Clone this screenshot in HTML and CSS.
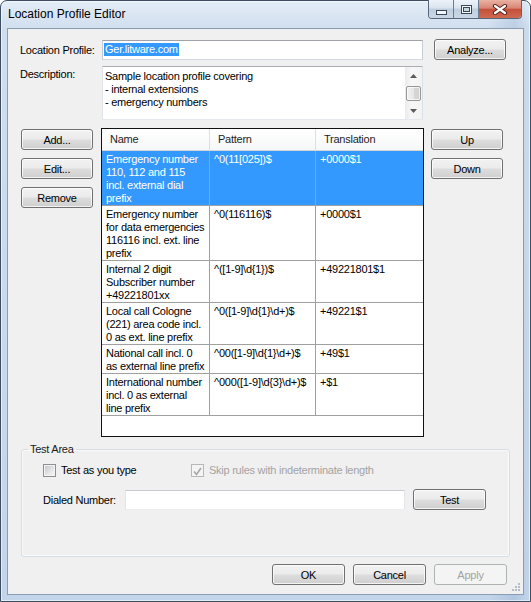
FILE: index.html
```html
<!DOCTYPE html>
<html>
<head>
<meta charset="utf-8">
<title>Location Profile Editor</title>
<link rel="stylesheet" href="styles.css">
</head>
<body>
<div class="window">
  <div class="titlebar">
    <div class="title">Location Profile Editor</div>
    <div class="caption">
      <div class="cbtn cmin"><svg width="11" height="5" viewBox="0 0 11 5"><rect x="0.5" y="0.5" width="10" height="4" fill="#f4f7fb" stroke="#3a4656"/></svg></div>
      <div class="cbtn cmax"><svg width="11" height="9" viewBox="0 0 11 9"><rect x="0.5" y="0.5" width="10" height="8" fill="#f4f7fb" stroke="#3a4656"/><rect x="2.5" y="2.5" width="6" height="4" fill="#c9d5e3" stroke="#3a4656"/></svg></div>
      <div class="cbtn cclose"><svg width="16" height="11" viewBox="0 0 16 11"><path d="M3 2 L13 9 M13 2 L3 9" stroke="#5b231b" stroke-width="4.2" stroke-linecap="round"/><path d="M3 2 L13 9 M13 2 L3 9" stroke="#ffffff" stroke-width="2.2" stroke-linecap="round"/></svg></div>
    </div>
  </div>

  <div class="client">
    <div class="profile-row">
      <label class="lbl">Location Profile:</label>
      <div class="textbox profile-box"><span class="sel">Ger.litware.com</span></div>
      <button class="btn gap-left">Analyze...</button>
    </div>

    <div class="desc-row">
      <label class="lbl lbl-top">Description:</label>
      <div class="textarea">
        <div class="ta-text">Sample location profile covering<br>- internal extensions<br>- emergency numbers</div>
        <div class="vscroll">
          <div class="sb-arrow"><svg width="7" height="4" viewBox="0 0 7 4"><path d="M0 4 L3.5 0 L7 4 Z" fill="#5a5a5a"/></svg></div>
          <div class="sb-track"><div class="sb-thumb"></div></div>
          <div class="sb-arrow"><svg width="7" height="4" viewBox="0 0 7 4"><path d="M0 0 L3.5 4 L7 0 Z" fill="#5a5a5a"/></svg></div>
        </div>
      </div>
    </div>

    <div class="rules">
      <div class="btn-col">
        <button class="btn">Add...</button>
        <button class="btn">Edit...</button>
        <button class="btn">Remove</button>
      </div>
      <div class="list">
        <table class="grid">
          <colgroup><col class="c1"><col class="c2"><col class="c3"></colgroup>
          <thead>
            <tr><th>Name</th><th>Pattern</th><th>Translation</th></tr>
          </thead>
          <tbody>
            <tr class="selected"><td>Emergency number<br>110, 112 and 115<br>incl. external dial<br>prefix</td><td>^0(11[025])$</td><td>+0000$1</td></tr>
            <tr><td>Emergency number<br>for data emergencies<br>116116 incl. ext. line<br>prefix</td><td>^0(116116)$</td><td>+0000$1</td></tr>
            <tr><td>Internal 2 digit<br>Subscriber number<br>+49221801xx</td><td>^([1-9]\d{1})$</td><td>+49221801$1</td></tr>
            <tr><td>Local call Cologne<br>(221) area code incl.<br>0 as ext. line prefix</td><td>^0([1-9]\d{1}\d+)$</td><td>+49221$1</td></tr>
            <tr><td>National call incl. 0<br>as external line prefix</td><td>^00([1-9]\d{1}\d+)$</td><td>+49$1</td></tr>
            <tr><td>International number<br>incl. 0 as external<br>line prefix</td><td>^000([1-9]\d{3}\d+)$</td><td>+$1</td></tr>
          </tbody>
        </table>
      </div>
      <div class="btn-col">
        <button class="btn">Up</button>
        <button class="btn">Down</button>
      </div>
    </div>

    <fieldset class="group">
      <legend>Test Area</legend>
      <div class="check-row">
        <label class="check"><span class="box"><span class="box-in"></span></span>Test as you type</label>
        <label class="check disabled"><span class="box box-dis"><svg width="9" height="9" viewBox="0 0 9 9"><path d="M1 4.5 L3.5 7.5 L8 1" fill="none" stroke="#a6a6a6" stroke-width="1.6"/></svg></span>Skip rules with indeterminate length</label>
      </div>
      <div class="dial-row">
        <label class="lbl">Dialed Number:</label>
        <div class="textbox dial-box"></div>
        <button class="btn test-btn">Test</button>
      </div>
    </fieldset>

    <div class="footer">
      <button class="btn">OK</button>
      <button class="btn">Cancel</button>
      <button class="btn" disabled>Apply</button>
    </div>

    <svg class="grip" width="10" height="10" viewBox="0 0 10 10">
      <g fill="#b4bcc6">
        <rect x="7" y="1" width="2" height="2"/>
        <rect x="4" y="4" width="2" height="2"/><rect x="7" y="4" width="2" height="2"/>
        <rect x="1" y="7" width="2" height="2"/><rect x="4" y="7" width="2" height="2"/><rect x="7" y="7" width="2" height="2"/>
      </g>
    </svg>
  </div>
</div>
</body>
</html>
```

FILE: styles.css
```css
* {
  box-sizing: border-box;
}

html, body {
  margin: 0;
  padding: 0;
}

body {
  width: 531px;
  height: 602px;
  overflow: hidden;
  background: #ffffff;
  font-family: "Liberation Sans", Arial, sans-serif;
  font-size: 11px;
  letter-spacing: -0.25px;
  color: #000;
}

/* ---------- window frame ---------- */
.window {
  width: 531px;
  height: 602px;
  display: flex;
  flex-direction: column;
  border: 1px solid #3d4e63;
  border-radius: 7px 7px 0 0;
  padding: 0 6px 6px 6px;
  background:
    linear-gradient(to right, rgba(255,255,255,0) 92%, rgba(90,130,180,0.18) 97%, rgba(255,255,255,0) 100%),
    linear-gradient(to bottom, #e4edf7 0, #d0deee 28px, #c3d5ea 100%);
  box-shadow: inset 0 0 0 1px rgba(255,255,255,0.55);
}

.titlebar {
  height: 27px;
  display: flex;
  align-items: flex-start;
  padding-left: 1px;
}

.title {
  font-size: 12px;
  letter-spacing: 0;
  line-height: 15px;
  padding-top: 6px;
  color: #000;
}

.caption {
  margin-left: auto;
  margin-right: 2px;
  margin-top: -1px;
  height: 19px;
  display: flex;
  border: 1px solid #56677c;
  border-top: none;
  border-radius: 0 0 4px 4px;
  overflow: hidden;
}

.cbtn {
  display: flex;
  align-items: center;
  justify-content: center;
}

.cmin, .cmax {
  width: 25px;
  border-right: 1px solid #6c7d92;
  background: linear-gradient(to bottom, #eef3f9 0%, #d9e3ee 45%, #bfcedf 50%, #cad7e6 100%);
}

.cmin svg {
  margin-top: 6px;
}

.cclose {
  width: 42px;
  background: linear-gradient(to bottom, #eab2a3 0%, #d98572 45%, #c5503b 52%, #cf6a50 100%);
}

/* ---------- client area ---------- */
.client {
  flex: 1;
  position: relative;
  display: flex;
  flex-direction: column;
  border: 1px solid #8b9db2;
  background: #f0f0f0;
}

.lbl {
  display: block;
  line-height: 20px;
}

.profile-row {
  display: flex;
  align-items: flex-start;
  margin-top: 10px;
  padding-left: 12px;
}

.profile-row .lbl {
  width: 82px;
  margin-top: 1px;
}

.textbox {
  height: 20px;
  background: #fff;
  border: 1px solid;
  border-color: #abadb3 #dbdfe6 #e3e9ef #e2e3ea;
}

.profile-box {
  width: 321px;
  margin-top: 1px;
  padding: 2px 0 0 1px;
  border-color: #9fa2a8 #c7ccd3 #d3d9df #c7ccd3;
}

.sel {
  display: inline-block;
  line-height: 13px;
  padding: 0 1px;
  background: #3399ff;
  color: #fff;
}

.gap-left {
  margin-left: 11px;
}

.desc-row {
  display: flex;
  align-items: flex-start;
  margin-top: 6px;
  padding-left: 12px;
}

.lbl-top {
  width: 82px;
  line-height: 13px;
  padding-top: 2px;
}

.textarea {
  width: 321px;
  height: 54px;
  display: flex;
  background: #fff;
  border: 1px solid;
  border-color: #abadb3 #dbdfe6 #e3e9ef #e2e3ea;
}

.ta-text {
  flex: 1;
  padding: 3px 2px;
  line-height: 13px;
}

.vscroll {
  width: 17px;
  display: flex;
  flex-direction: column;
  background: linear-gradient(to right, #ebebeb, #f7f7f7 40%, #f3f3f3);
}

.sb-arrow {
  height: 17px;
  display: flex;
  align-items: center;
  justify-content: center;
}

.sb-track {
  flex: 1;
  padding: 2px 1px 0 1px;
}

.sb-thumb {
  height: 15px;
  border: 1px solid #979797;
  border-radius: 2px;
  background: linear-gradient(to right, #f2f2f2, #e6e6e6 50%, #d8d8d8 51%, #d0d0d0);
  box-shadow: inset 0 0 0 1px rgba(255,255,255,0.7);
}

/* ---------- buttons ---------- */
.btn {
  width: 72px;
  height: 21px;
  padding: 0;
  font: inherit;
  letter-spacing: inherit;
  color: #000;
  border: 1px solid #707070;
  border-radius: 3px;
  background: linear-gradient(to bottom, #f2f2f2 0%, #ebebeb 48%, #dddddd 52%, #cfcfcf 100%);
  box-shadow: inset 0 0 0 1px rgba(255,255,255,0.75);
}

.btn:disabled {
  color: #a3a3a3;
  border-color: #adb2b5;
  background: #f4f4f4;
  box-shadow: none;
}

/* ---------- rules list ---------- */
.rules {
  display: flex;
  align-items: flex-start;
  margin-top: 8px;
  padding-left: 13px;
}

.btn-col {
  display: flex;
  flex-direction: column;
  gap: 8px;
  padding-top: 1px;
}

.list {
  width: 323px;
  height: 309px;
  margin: 0 7px 0 8px;
  border: 1px solid #111;
  background: #fff;
  overflow: hidden;
}

.grid {
  width: 321px;
  table-layout: fixed;
  border-collapse: separate;
  border-spacing: 0;
}

.grid col.c1 { width: 108px; }
.grid col.c2 { width: 106px; }
.grid col.c3 { width: 107px; }

.grid th {
  height: 22px;
  padding: 0 0 1px 8px;
  text-align: left;
  font-weight: normal;
  color: #1e1e1e;
  background: linear-gradient(to bottom, #ffffff, #f6f7f8);
  border-right: 1px solid #dcdfe3;
  border-bottom: 1px solid #d5d5d5;
}

.grid td {
  padding: 2px 2px 0 4px;
  line-height: 13px;
  vertical-align: top;
  white-space: nowrap;
  border-right: 1px solid #a0a0a0;
  border-bottom: 1px solid #a0a0a0;
}

.grid th:last-child,
.grid td:last-child {
  border-right: none;
}

.grid tr.selected td {
  background: #3399ff;
  color: #fff;
}

/* ---------- test area ---------- */
.group {
  width: 489px;
  height: 114px;
  margin: 6px 0 0 13px;
  padding: 8px 0 0 21px;
  border: 1px solid #d5dfe5;
  border-radius: 3px;
  box-shadow: inset 0 0 0 1px rgba(255,255,255,0.6);
}

.group legend {
  margin-left: -15px;
  padding: 0 2px;
  line-height: 13px;
  color: #1a1a1a;
}

.check-row {
  display: grid;
  grid-template-columns: 148px auto;
  line-height: 13px;
}

.check {
  display: flex;
  align-items: center;
  gap: 5px;
}

.box {
  width: 13px;
  height: 13px;
  padding: 1px;
  border: 1px solid #8e8f8f;
  background: #f4f4f4;
}

.box-in {
  display: block;
  width: 9px;
  height: 9px;
  background: linear-gradient(135deg, #c3c7cd 0%, #e4e6e8 60%, #f4f4f4 100%);
}

.box-dis {
  border-color: #b7b7b7;
  padding: 1px 0 0 1px;
  background: #f4f4f4;
}

.check.disabled {
  color: #a3a3a3;
}

.dial-row {
  display: flex;
  align-items: flex-start;
  margin-top: 12px;
}

.dial-row .lbl {
  width: 82px;
  margin-top: 1px;
}

.dial-box {
  width: 280px;
  margin-top: 1px;
  border-color: #c8cbd0 #e3e6ea #eceff2 #e3e6ea;
}

.test-btn {
  width: 73px;
  margin-left: 8px;
}

/* ---------- footer ---------- */
.footer {
  display: flex;
  justify-content: flex-end;
  gap: 8px;
  margin-top: 7px;
  padding-right: 16px;
}

.footer .btn {
  width: 73px;
}

.grip {
  position: absolute;
  right: 2px;
  bottom: 2px;
}
```
